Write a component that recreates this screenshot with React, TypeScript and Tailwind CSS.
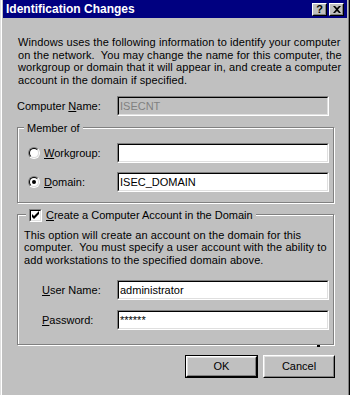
import React from 'react'

const font = { fontFamily: '"Liberation Sans", Arial, sans-serif' }

function Field({ value, disabled }: { value?: string; disabled?: boolean }) {
  return (
    <div className="w-[212px] h-[20px] border border-t-[#808080] border-l-[#808080] border-b-white border-r-white">
      <div
        className={`h-full border border-t-black border-l-black border-b-[#dfdfdf] border-r-[#dfdfdf] pl-[1px] leading-[16px] text-[11px] whitespace-nowrap ${
          disabled ? 'bg-[#c0c0c0] text-[#808080]' : 'bg-white text-black'
        }`}
      >
        {value}
      </div>
    </div>
  )
}

function Radio({ checked }: { checked?: boolean }) {
  return (
    <div className="w-[12px] h-[12px] rounded-full border border-t-[#808080] border-l-[#808080] border-b-white border-r-white shrink-0">
      <div className="w-full h-full rounded-full bg-white border border-t-black border-l-black border-b-[#dfdfdf] border-r-[#dfdfdf] flex items-center justify-center">
        {checked && <div className="w-[4px] h-[4px] rounded-full bg-black" />}
      </div>
    </div>
  )
}

function Check() {
  return (
    <div className="w-[13px] h-[13px] border border-t-[#808080] border-l-[#808080] border-b-white border-r-white shrink-0">
      <div className="w-full h-full bg-white border border-t-black border-l-black border-b-[#dfdfdf] border-r-[#dfdfdf]">
        <svg width="9" height="9" viewBox="0 0 9 9">
          <path d="M1 3v3l2 2l5-5v-3l-5 5z" fill="#000" />
        </svg>
      </div>
    </div>
  )
}

function Btn({ label, isDefault, w }: { label: string; isDefault?: boolean; w: string }) {
  const inner = (
    <div className="h-full border border-t-white border-l-white border-b-black border-r-black">
      <div className="h-full border border-t-[#dfdfdf] border-l-[#dfdfdf] border-b-[#808080] border-r-[#808080] flex items-center justify-center text-[11px]">
        {label}
      </div>
    </div>
  )
  return (
    <div className={`${w} h-[23px] ${isDefault ? 'border border-black' : ''}`}>{inner}</div>
  )
}

function CapBtn({ children }: { children: React.ReactNode }) {
  return (
    <div className="w-[15px] h-[13px] bg-[#c0c0c0] border border-t-white border-l-white border-b-black border-r-black">
      <div className="h-full border border-t-[#c0c0c0] border-l-[#c0c0c0] border-b-[#808080] border-r-[#808080] flex items-center justify-center text-[11px] font-bold leading-none text-black">
        {children}
      </div>
    </div>
  )
}

export default function App() {
  return (
    <div
      style={font}
      className="w-[350px] h-[395px] overflow-hidden bg-[#c0c0c0] text-black text-[11px] border-l border-l-[#dfdfdf] border-r border-r-black"
    >
      <div className="h-full border-l border-l-white border-r border-r-[#808080] px-px">
        <div className="h-[18px] bg-[#000080] flex items-center justify-between pl-[3px] pr-[3px]">
          <span className="text-white font-bold text-[12px]">Identification Changes</span>
          <div className="flex gap-[2px]">
            <CapBtn>?</CapBtn>
            <CapBtn>
              <svg width="8" height="7" viewBox="0 0 8 7">
                <path d="M0 0h2l2 2l2-2h2l-3 3.5l3 3.5h-2l-2-2l-2 2h-2l3-3.5z" fill="#000" />
              </svg>
            </CapBtn>
          </div>
        </div>

        <div className="pl-[14px] pr-[12px]">
          <p className="mt-[18px] ml-[1px] w-[324px] leading-[12.7px] text-[11px] tracking-[0.1px]">
            Windows uses the following information to identify your computer on the network.&nbsp; You may change the name for this computer, the workgroup or domain that it will appear in, and create a computer account in the domain if specified.
          </p>

          <div className="mt-[9px] flex items-center">
            <span className="w-[100px]">
              Computer <u>N</u>ame:
            </span>
            <Field value="ISECNT" disabled />
          </div>

          <div className="relative mt-[11px] w-[317px] h-[76px] border border-[#808080] shadow-[inset_1px_1px_0_#fff,1px_1px_0_#fff] pt-[15px]">
            <span className="absolute -top-[8px] left-[6px] px-[3px] bg-[#c0c0c0]">Member of</span>
            <div className="flex items-center">
              <div className="w-[99px] flex items-center pl-[10px] gap-[4px]">
                <Radio />
                <span>
                  <u>W</u>orkgroup:
                </span>
              </div>
              <Field />
            </div>
            <div className="flex items-center mt-[9px]">
              <div className="w-[99px] flex items-center pl-[10px] gap-[4px]">
                <Radio checked />
                <span>
                  <u>D</u>omain:
                </span>
              </div>
              <Field value="ISEC_DOMAIN" />
            </div>
          </div>

          <div className="relative mt-[11px] w-[317px] h-[131px] border border-[#808080] shadow-[inset_1px_1px_0_#fff,1px_1px_0_#fff] pt-[14px]">
            <div className="absolute -top-[8px] left-[8px] px-[3px] bg-[#c0c0c0] flex items-center gap-[4px]">
              <Check />
              <span>
                <u>C</u>reate a Computer Account in the Domain
              </span>
            </div>
            <p className="pl-[6px] w-[312px] leading-[12.5px] tracking-[0.1px]">
              This option will create an account on the domain for this computer.&nbsp; You must specify a user account with the ability to add workstations to the specified domain above.
            </p>
            <div className="flex items-center mt-[14px]">
              <span className="w-[99px] pl-[24px]">
                <u>U</u>ser Name:
              </span>
              <Field value="administrator" />
            </div>
            <div className="flex items-center mt-[10px]">
              <span className="w-[99px] pl-[24px]">
                <u>P</u>assword:
              </span>
              <Field value="******" />
            </div>
            <div className="absolute -bottom-[3px] right-[13px] w-[3px] h-[2px] bg-black" />
          </div>

          <div className="mt-[10px] flex justify-end gap-[5px]">
            <Btn label="OK" isDefault w="w-[73px]" />
            <Btn label="Cancel" w="w-[72px]" />
          </div>
        </div>
      </div>
    </div>
  )
}
